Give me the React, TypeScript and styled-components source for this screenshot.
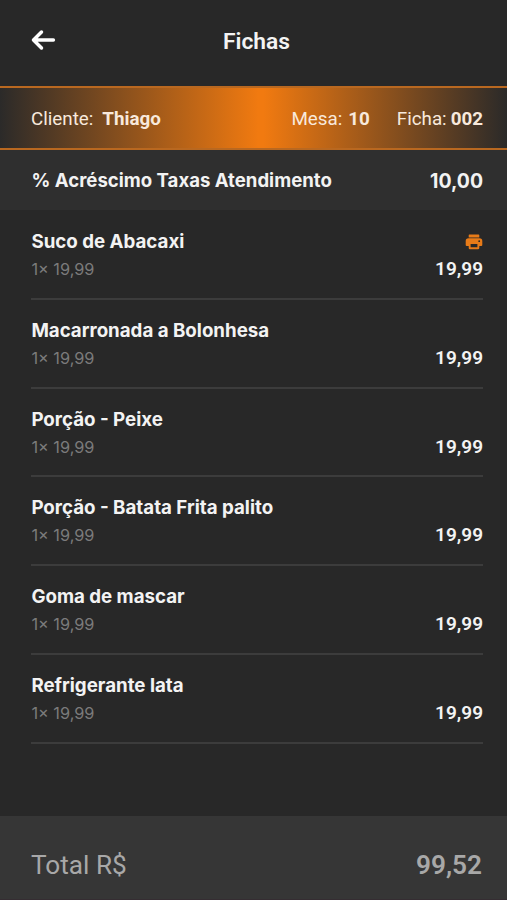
import React from "react";
import styled, { createGlobalStyle } from "styled-components";

const GlobalStyle = createGlobalStyle`
  * { box-sizing: border-box; }
  body { margin: 0; background: #282828; }
`;

const Screen = styled.main`
  display: flex;
  flex-direction: column;
  width: 507px;
  height: 900px;
  overflow: hidden;
  background: #282828;
  color: #f3f3f3;
  font-family: Roboto, sans-serif;
  white-space: nowrap;
`;

const Header = styled.header`
  display: grid;
  grid-template-columns: 80px 1fr 74px;
  align-items: center;
  flex: none;
  height: 86px;
  padding: 0 0 6px 0;
`;

const BackButton = styled.button`
  display: flex;
  justify-content: flex-start;
  margin: 0;
  padding: 0 0 0 31px;
  border: 0;
  background: none;
  color: #fff;
`;

const Title = styled.h1`
  margin: 0;
  padding-top: 3px;
  text-align: center;
  font-size: 22.8px;
  line-height: 28px;
  font-weight: 600;
`;

const Banner = styled.section`
  display: flex;
  align-items: center;
  flex: none;
  height: 64px;
  padding: 1px 24px 0 31px;
  border-top: 2px solid #b96820;
  border-bottom: 2px solid #b96820;
  background: linear-gradient(90deg, #2b2a29 0%, #f17a10 51%, #f17a10 52%, #2b2a29 100%);
  color: #f8e9dc;
  font-size: 18.8px;
  line-height: 24px;
`;

const Field = styled.div<{ $gap: number; $push?: boolean }>`
  display: flex;
  gap: ${(p) => p.$gap}px;
  margin-left: ${(p) => (p.$push ? "auto" : "0")};
  & + & + & { margin-left: 27px; }
  strong { font-weight: 700; }
`;

const Surcharge = styled.section`
  display: flex;
  align-items: center;
  justify-content: space-between;
  flex: none;
  height: 60px;
  padding: 0 24px 0 31.5px;
  background: #2f2f2f;
  font: 650 18.6px/24px Inter, sans-serif;
`;

const SurchargeLabel = styled.span`
  padding-bottom: 1px;
`;

const SurchargeValue = styled.span`
  padding-top: 1px;
  font-size: 19.4px;
`;

const List = styled.ul`
  flex: 1;
  margin: 0;
  padding: 1px 24px 0 31.4px;
  list-style: none;
`;

const Item = styled.li`
  display: grid;
  grid-template-columns: 1fr auto;
  grid-template-rows: 28px 28px;
  align-items: center;
  height: 88.8px;
  padding-top: 16px;
  border-bottom: 2px solid #3c3c3c;
`;

const ItemName = styled.span`
  padding-top: 2px;
  font: 650 18.72px/28px Inter, sans-serif;
`;

const Quantity = styled.span`
  color: #7b7b7b;
  font: 400 16.3px/28px Inter, sans-serif;
`;

const Price = styled.span`
  padding-top: 0.2px;
  text-align: right;
  font-size: 19px;
  line-height: 28px;
  font-weight: 600;
`;

const PrintSlot = styled.span`
  display: flex;
  justify-content: flex-end;
  padding-top: 2px;
  color: #e87b18;
`;

const Footer = styled.footer`
  display: flex;
  align-items: center;
  justify-content: space-between;
  flex: none;
  height: 84px;
  padding: 15px 25px 0 31px;
  border-bottom: 1px solid #352d32;
  background: #363636;
  color: #a8a8a8;
  font-size: 26.2px;
  line-height: 32px;
  strong { font-weight: 600; }
`;

const BackIcon = () => (
  <svg width="25" height="22" viewBox="0 0 25 22" fill="none" stroke="currentColor" strokeWidth="3.5" strokeLinecap="round" strokeLinejoin="round">
    <path d="M22.4 11H2.5M10.5 3L2.5 11L10.5 19" />
  </svg>
);

const PrinterIcon = () => (
  <svg width="18" height="16" viewBox="0 0 18 16">
    <path
      fill="currentColor"
      fillRule="evenodd"
      d="M4.4 .5h9.2a.7.7 0 0 1 .7.7v2.3H3.7V1.2A.7.7 0 0 1 4.4 .5zM3.5 4.2h11A2.8 2.8 0 0 1 17.3 7v4a1.1 1.1 0 0 1-1.1 1.1H14.3v2a1.2 1.2 0 0 1-1.2 1.2H4.9a1.2 1.2 0 0 1-1.2-1.2v-2H1.8A1.1 1.1 0 0 1 .7 11V7A2.8 2.8 0 0 1 3.5 4.2zM5.6 10.1v3.2h6.8v-3.2zM14.2 6.3a.9.9 0 1 0 0 1.8a.9.9 0 0 0 0-1.8z"
    />
  </svg>
);

const items = [
  { name: "Suco de Abacaxi", printable: true },
  { name: "Macarronada a Bolonhesa" },
  { name: "Porção - Peixe" },
  { name: "Porção - Batata Frita palito" },
  { name: "Goma de mascar" },
  { name: "Refrigerante lata" },
];

export default function App() {
  return (
    <Screen>
      <GlobalStyle />
      <Header>
        <BackButton aria-label="Voltar"><BackIcon /></BackButton>
        <Title>Fichas</Title>
      </Header>
      <Banner>
        <Field $gap={9}><span>Cliente:</span><strong>Thiago</strong></Field>
        <Field $gap={6} $push><span>Mesa:</span><strong>10</strong></Field>
        <Field $gap={4}><span>Ficha:</span><strong>002</strong></Field>
      </Banner>
      <Surcharge>
        <SurchargeLabel>% Acréscimo Taxas Atendimento</SurchargeLabel>
        <SurchargeValue>10,00</SurchargeValue>
      </Surcharge>
      <List>
        {items.map((item) => (
          <Item key={item.name}>
            <ItemName>{item.name}</ItemName>
            <PrintSlot>{item.printable && <PrinterIcon />}</PrintSlot>
            <Quantity>1× 19,99</Quantity>
            <Price>19,99</Price>
          </Item>
        ))}
      </List>
      <Footer>
        <span>Total R$</span>
        <strong>99,52</strong>
      </Footer>
    </Screen>
  );
}
